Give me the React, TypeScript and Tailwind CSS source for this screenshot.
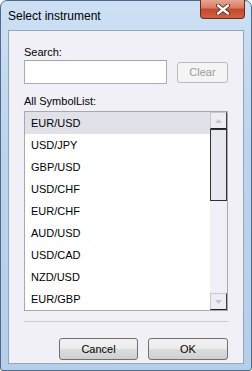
const symbols = [
    'EUR/USD',
    'USD/JPY',
    'GBP/USD',
    'USD/CHF',
    'EUR/CHF',
    'AUD/USD',
    'USD/CAD',
    'NZD/USD',
    'EUR/GBP',
]

const font = { fontFamily: '"Liberation Sans", Arial, sans-serif' }

const ArrowUp = () => (
    <svg width="7" height="4" viewBox="0 0 7 4">
        <path d="M0 4 L3.5 0 L7 4 Z" fill="#c4c4cc" />
    </svg>
)

const ArrowDown = () => (
    <svg width="7" height="4" viewBox="0 0 7 4">
        <path d="M0 0 L3.5 4 L7 0 Z" fill="#c4c4cc" />
    </svg>
)

const WinButton = ({ label, className }: { label: string; className: string }) => (
    <button
        className={`h-[22px] rounded-[3px] border border-[#707070] bg-[linear-gradient(#f2f2f2_0%,#ebebeb_50%,#dddddd_50%,#cfcfcf_100%)] text-[11px] text-black ${className}`}
    >
        {label}
    </button>
)

export default function App() {
    return (
        <div
            className="w-[252px] h-[371px] rounded-t-[7px] rounded-b-[3px] border border-[#4f6b8a] bg-[linear-gradient(#cde0f4,#bcd4ee_40%,#b5cfea)] flex flex-col"
            style={font}
        >
            <div className="h-[29px] flex items-start justify-between">
                <span className="text-[12px] text-black ml-[7px] mt-[8px] leading-[14px]">
                    Select instrument
                </span>
                <div className="mr-[6px] w-[45px] h-[19px] -mt-px rounded-b-[4px] border border-[#6b2a20] border-t-0 bg-[linear-gradient(#e8a593,#d77b62_45%,#c3482c_50%,#d0603f_100%)] flex items-center justify-center">
                    <svg width="14" height="11" viewBox="0 0 14 11">
                        <path
                            d="M2 1.5 L12 9.5 M12 1.5 L2 9.5"
                            stroke="#4a2520"
                            strokeWidth="4"
                            strokeLinecap="round"
                        />
                        <path
                            d="M2 1.5 L12 9.5 M12 1.5 L2 9.5"
                            stroke="#ffffff"
                            strokeWidth="2.4"
                            strokeLinecap="round"
                        />
                    </svg>
                </div>
            </div>
            <div className="mx-[7px] h-[334px] border border-[#94a6bb] bg-[#f0f0f6] flex flex-col px-[15px] pt-[15px] text-[11px] leading-[13px] text-black">
                <span>Search:</span>
                <div className="flex items-start mt-px">
                    <div className="w-[143px] h-[24px] border border-[#abadb3] border-t-[#a0a3ab] bg-white" />
                    <button className="ml-[10px] mt-[2px] w-[51px] h-[21px] rounded-[3px] border border-[#b8bbbe] bg-[#f4f4f4] text-[11px] text-[#9a9a9a]">
                        Clear
                    </button>
                </div>
                <span className="mt-[11px]">All SymbolList:</span>
                <div className="mt-[3px] w-[204px] h-[200px] border border-[#a7a9b2] bg-white flex">
                    <div className="flex-1 flex flex-col">
                        {symbols.map((s, i) => (
                            <div
                                key={`symbol_${i}`}
                                className={`h-[22px] pl-[6px] flex items-center text-[11px] ${i === 0 ? 'bg-[#e1e1ea]' : ''}`}
                            >
                                {s}
                            </div>
                        ))}
                    </div>
                    <div className="w-[17px] bg-[#f0f0f6] flex flex-col">
                        <div className="h-[17px] border border-[#c8c8cc] border-r-[#404040] border-b-[#202020] bg-[#ededf3] flex items-center justify-center">
                            <ArrowUp />
                        </div>
                        <div className="h-[72px] border border-[#303030] border-t-[#303030] bg-[#e8e8ef]" />
                        <div className="flex-1" />
                        <div className="h-[17px] border border-[#c8c8cc] border-r-[#404040] border-b-[#202020] bg-[#ededf3] flex items-center justify-center">
                            <ArrowDown />
                        </div>
                    </div>
                </div>
                <div className="mt-[10px] w-[204px] h-px bg-[#c9c9d0]" />
                <div className="mt-[16px] w-[204px] flex justify-end gap-[10px]">
                    <WinButton label="Cancel" className="w-[79px]" />
                    <WinButton label="OK" className="w-[80px]" />
                </div>
            </div>
        </div>
    )
}
